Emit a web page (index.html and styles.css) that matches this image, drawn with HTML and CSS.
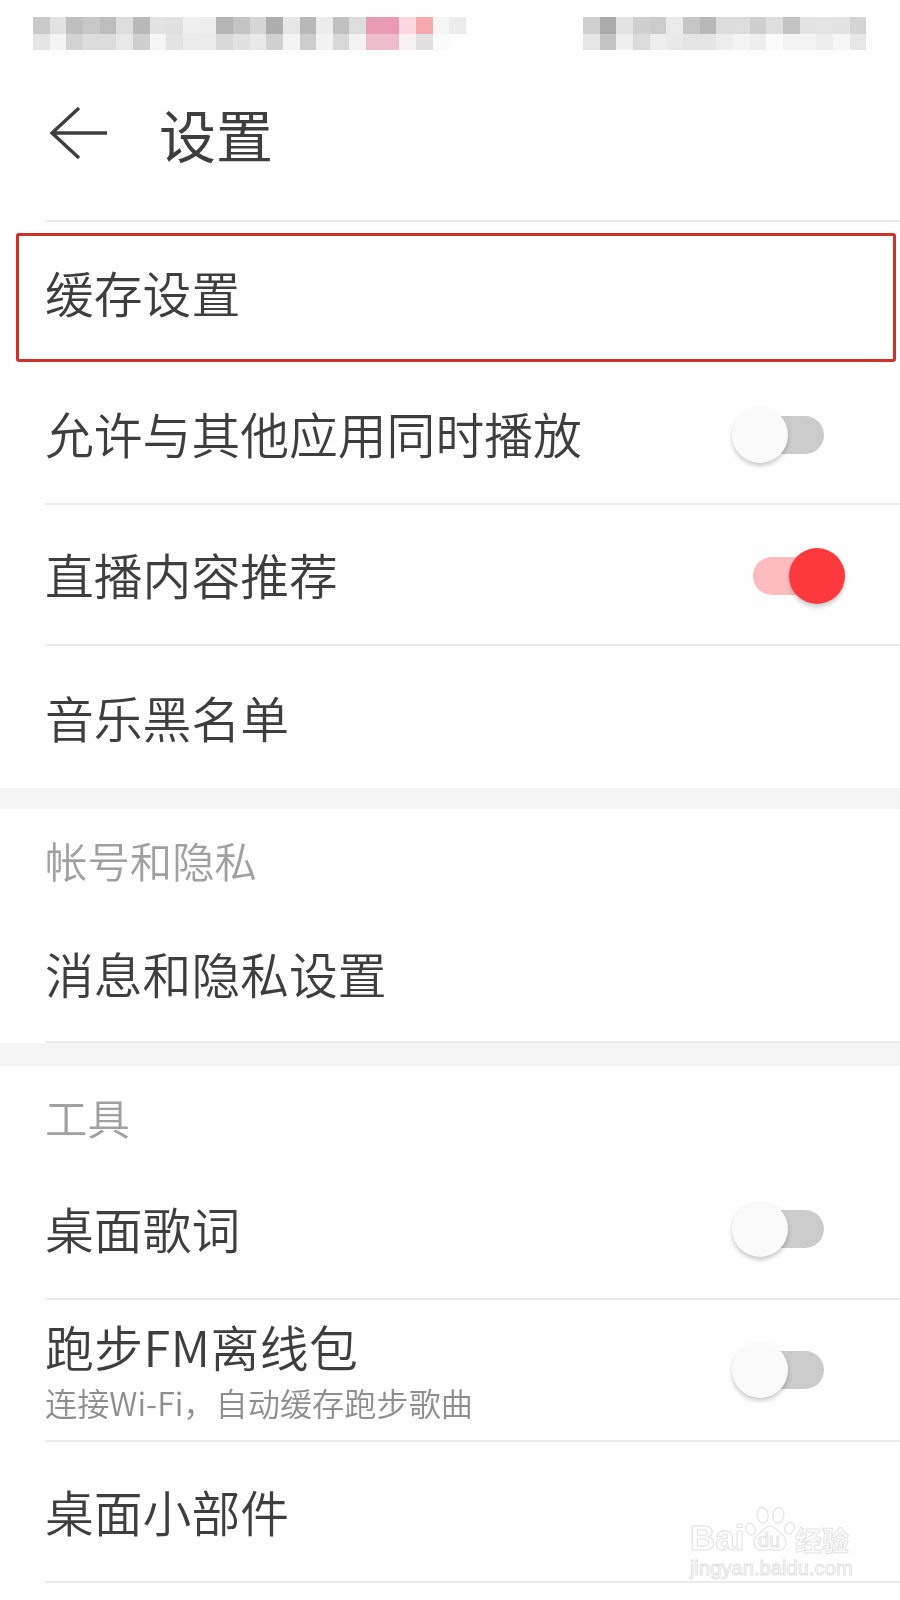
FILE: index.html
```html
<!DOCTYPE html>
<html lang="zh-CN">
<head>
<meta charset="utf-8">
<title>设置</title>
<link rel="stylesheet" href="styles.css">
</head>
<body>
<main class="page">
  <div class="status" aria-hidden="true">
    <div class="mosaic mosaic-left">
      <i class="p-c9"></i><i class="p-e2"></i><i class="p-bf"></i><i class="p-c8"></i><i class="p-bd"></i><i class="p-dd"></i><i class="p-b9"></i><i class="p-e2"></i><i class="p-e0"></i><i class="p-f0"></i><i class="p-ee"></i><i class="p-b5"></i><i class="p-c4"></i><i class="p-d6"></i><i class="p-ae"></i><i class="p-e6"></i><i class="p-b8"></i><i class="p-ec"></i><i class="p-c0"></i><i class="p-dd"></i><i class="r-1"></i><i class="r-1"></i><i class="r-2"></i><i class="r-3"></i><i class="p-f5"></i><i class="p-ec"></i>
      <i class="p-e5"></i><i class="p-f4"></i><i class="p-d3"></i><i class="p-dc"></i><i class="p-dc"></i><i class="p-e8"></i><i class="p-cf"></i><i class="p-f5"></i><i class="p-e3"></i><i class="p-ec"></i><i class="p-ec"></i><i class="p-d8"></i><i class="p-e1"></i><i class="p-e9"></i><i class="p-d0"></i><i class="p-f4"></i><i class="p-cd"></i><i class="p-f2"></i><i class="p-d8"></i><i class="p-f3"></i><i class="r-4"></i><i class="r-4"></i><i class="r-5"></i><i class="r-6"></i><i class="p-fb"></i><i class="p-ff"></i>
    </div>
    <div class="mosaic mosaic-right">
      <i class="p-d0"></i><i class="p-aa"></i><i class="p-e3"></i><i class="p-cf"></i><i class="p-cb"></i><i class="p-ea"></i><i class="p-c6"></i><i class="p-b8"></i><i class="p-dc"></i><i class="p-dd"></i><i class="p-cf"></i><i class="p-de"></i><i class="p-c3"></i><i class="p-e3"></i><i class="p-e4"></i><i class="p-e2"></i><i class="p-d4"></i>
      <i class="p-e6"></i><i class="p-c3"></i><i class="p-f0"></i><i class="p-dc"></i><i class="p-ee"></i><i class="p-e9"></i><i class="p-e5"></i><i class="p-e5"></i><i class="p-ed"></i><i class="p-f4"></i><i class="p-ee"></i><i class="p-fb"></i><i class="p-f3"></i><i class="p-f3"></i><i class="p-ee"></i><i class="p-f6"></i><i class="p-e7"></i>
    </div>
  </div>

  <header class="topbar">
    <svg class="back" viewBox="0 0 60 54" aria-hidden="true">
      <path d="M58 27H3M30 2 3 27l27 25" />
    </svg>
    <h1 class="page-title">设置</h1>
  </header>

  <section class="group">
    <div class="row row-first row-marked"><span class="row-title">缓存设置</span></div>
    <div class="row row-tall row-line">
      <span class="row-title">允许与其他应用同时播放</span>
      <span class="switch"><span class="track"></span><span class="knob"></span></span>
    </div>
    <div class="row row-line">
      <span class="row-title">直播内容推荐</span>
      <span class="switch switch-on"><span class="track"></span><span class="knob"></span></span>
    </div>
    <div class="row row-tall"><span class="row-title">音乐黑名单</span></div>
  </section>

  <div class="band band-a"></div>

  <section class="group">
    <h2 class="group-label">帐号和隐私</h2>
    <div class="row row-tall row-line row-low"><span class="row-title">消息和隐私设置</span></div>
  </section>

  <div class="band band-b"></div>

  <section class="group">
    <h2 class="group-label group-label-b">工具</h2>
    <div class="row row-line">
      <span class="row-title">桌面歌词</span>
      <span class="switch switch-high"><span class="track"></span><span class="knob"></span></span>
    </div>
    <div class="row row-tall row-line">
      <span class="row-text">
        <span class="row-title row-title-stack">跑步FM离线包</span>
        <span class="row-sub">连接Wi-Fi，自动缓存跑步歌曲</span>
      </span>
      <span class="switch switch-high"><span class="track"></span><span class="knob"></span></span>
    </div>
    <div class="row row-line"><span class="row-title">桌面小部件</span></div>
  </section>

  <div class="watermark" aria-hidden="true">
    <div class="wm-top">
      <span class="wm-bai">Bai</span>
      <span class="wm-paw">
        <svg viewBox="0 0 54 54">
          <ellipse cx="6" cy="26" rx="5" ry="6.5" transform="rotate(-25 6 26)"/>
          <ellipse cx="19" cy="11" rx="6" ry="8.5" transform="rotate(-8 19 11)"/>
          <ellipse cx="36" cy="11" rx="6" ry="8.5" transform="rotate(8 36 11)"/>
          <ellipse cx="48" cy="25" rx="5" ry="6.5" transform="rotate(25 48 25)"/>
          <path d="M27 23c6 0 8 5 13 9 6 5 6 17-5 17-4 0-6-1-8-1s-4 1-8 1C8 49 8 37 14 32c5-4 7-9 13-9z"/>
        </svg>
        <span class="wm-du">du</span>
      </span>
      <span class="wm-cn">经验</span>
    </div>
    <div class="wm-url">jingyan.baidu.com</div>
  </div>
</main>
</body>
</html>
```

FILE: styles.css
```css
* { box-sizing: border-box; }
html, body { margin: 0; padding: 0; background: #fefefe; }
body {
  font-family: "Noto Sans CJK SC", "Noto Sans", sans-serif;
  color: #3e3e3e;
}
.page {
  position: relative;
  width: 900px;
  height: 1600px;
  overflow: hidden;
  background: #fefefe;
  filter: blur(.45px);
}

/* pixelated status bar */
.status { display: flex; gap: 117px; height: 68px; padding: 17px 0 0 33px; }
.mosaic { display: grid; grid-auto-rows: 16.5px; height: 33px; }
.mosaic-left { grid-template-columns: repeat(26, 16.67px); }
.mosaic-right { grid-template-columns: repeat(17, 16.67px); }
.p-aa { background: #aaa; } .p-ae { background: #aeaeae; } .p-b5 { background: #b5b5b5; }
.p-b8 { background: #b8b8b8; } .p-b9 { background: #b9b9b9; } .p-bd { background: #bdbdbd; }
.p-bf { background: #bfbfbf; } .p-c0 { background: #c0c0c0; } .p-c3 { background: #c3c3c3; }
.p-c4 { background: #c4c4c4; } .p-c6 { background: #c6c6c6; } .p-c8 { background: #c8c8c8; }
.p-c9 { background: #c9c9c9; } .p-cb { background: #cbcbcb; } .p-cd { background: #cdcdcd; }
.p-cf { background: #cfcfcf; } .p-d0 { background: #d0d0d0; } .p-d3 { background: #d3d3d3; }
.p-d4 { background: #d4d4d4; } .p-d6 { background: #d6d6d6; } .p-d8 { background: #d8d8d8; }
.p-dc { background: #dcdcdc; } .p-dd { background: #ddd; } .p-de { background: #dedede; }
.p-e0 { background: #e0e0e0; } .p-e1 { background: #e1e1e1; } .p-e2 { background: #e2e2e2; }
.p-e3 { background: #e3e3e3; } .p-e4 { background: #e4e4e4; } .p-e5 { background: #e5e5e5; }
.p-e6 { background: #e6e6e6; } .p-e7 { background: #e7e7e7; } .p-e8 { background: #e8e8e8; }
.p-e9 { background: #e9e9e9; } .p-ea { background: #eaeaea; } .p-ec { background: #ececec; }
.p-ed { background: #ededed; } .p-ee { background: #eee; } .p-f0 { background: #f0f0f0; }
.p-f2 { background: #f2f2f2; } .p-f3 { background: #f3f3f3; } .p-f4 { background: #f4f4f4; }
.p-f5 { background: #f5f5f5; } .p-f6 { background: #f6f6f6; } .p-fb { background: #fbfbfb; }
.p-ff { background: #fefefe; }
.r-1 { background: #e89bb3; } .r-2 { background: #fbd8df; } .r-3 { background: #f5a9ae; }
.r-4 { background: #efbccb; } .r-5 { background: #f8f2f4; } .r-6 { background: #e2dfe0; }

/* title bar */
.topbar {
  display: flex;
  align-items: center;
  gap: 50px;
  height: 154px;
  padding: 0 0 24px 49px;
  position: relative;
}
.topbar::after {
  content: "";
  position: absolute;
  left: 45px; right: 0; bottom: 0;
  height: 2px;
  background: #ececec;
}
.back { width: 60px; height: 54px; flex: none; }
.back path { fill: none; stroke: #3e3e3e; stroke-width: 3.4; }
.page-title { margin: 0; font-size: 57px; font-weight: 400; line-height: 1; color: #3e3e3e; }

/* rows */
.row {
  display: flex;
  align-items: center;
  justify-content: space-between;
  height: 141px;
  margin-left: 45px;
  position: relative;
}
.row-tall { height: 142px; }
.row-line { border-bottom: 2px solid #ececec; }
.row-first { height: 141px; }
.row-low { padding-top: 4px; }
.row-marked::before {
  content: "";
  position: absolute;
  left: -29px; right: 4px; top: 11px; bottom: 1px;
  border: 3px solid #d0302a;
  border-radius: 3px;
}
.row-title { font-size: 48.8px; font-weight: 350; line-height: 1; color: #3e3e3e; }
.row-text { display: flex; flex-direction: column; }
.row-title-stack { line-height: 54px; letter-spacing: .5px; }
.row-sub { font-size: 32.2px; font-weight: 350; line-height: 40px; margin-top: 9px; color: #8e8e8e; }

.band { background: #f5f5f5; }
.band-a { height: 21px; }
.band-b { height: 23px; }

.group-label {
  margin: 0 0 0 45px;
  height: 92px;
  padding-top: 24px;
  font-size: 42.4px;
  font-weight: 350;
  line-height: 54px;
  color: #a0a0a0;
}
.group-label-b { height: 93px; }

/* switches */
.switch {
  position: relative;
  display: flex;
  align-items: center;
  justify-content: center;
  width: 113px;
  height: 56px;
  margin: 4px 55px 0 0;
  flex: none;
}
.switch-high { margin-top: 0; }
.track { width: 71px; height: 38px; border-radius: 19px; background: #cbcbcb; }
.knob {
  position: absolute;
  left: 0; top: 0;
  width: 56px; height: 56px;
  border-radius: 50%;
  background: #fafafa;
  box-shadow: 0 3px 4px rgba(0,0,0,.2);
}
.switch-on { margin-top: 2px; }
.switch-on .track { background: #fdbcbf; }
.switch-on .knob { left: auto; right: 0; background: #fc3a3e; }

/* watermark */
.watermark {
  position: absolute;
  left: 690px;
  top: 1503px;
  width: 165px;
  font-family: "Liberation Sans", "Noto Sans CJK SC", sans-serif;
  color: #fefefe;
  -webkit-text-stroke: 1px #e2e2e2;
}
.wm-top { display: flex; align-items: flex-end; height: 52px; }
.wm-bai { font-size: 35px; font-weight: 700; line-height: 35px; width: 55px; flex: none; }
.wm-paw { position: relative; display: block; width: 50px; height: 50px; flex: none; }
.wm-paw svg { display: block; width: 50px; height: 50px; }
.wm-paw ellipse, .wm-paw path { fill: #fefefe; stroke: #e2e2e2; stroke-width: 1.2; }
.wm-du {
  position: absolute;
  left: 13px; top: 25px;
  font-size: 20px;
  line-height: 20px;
}
.wm-cn { font-family: "Noto Sans CJK SC", sans-serif; font-size: 27px; line-height: 30px; font-weight: 700; white-space: nowrap; }
.wm-url { font-size: 20.2px; line-height: 26px; white-space: nowrap; }
```
